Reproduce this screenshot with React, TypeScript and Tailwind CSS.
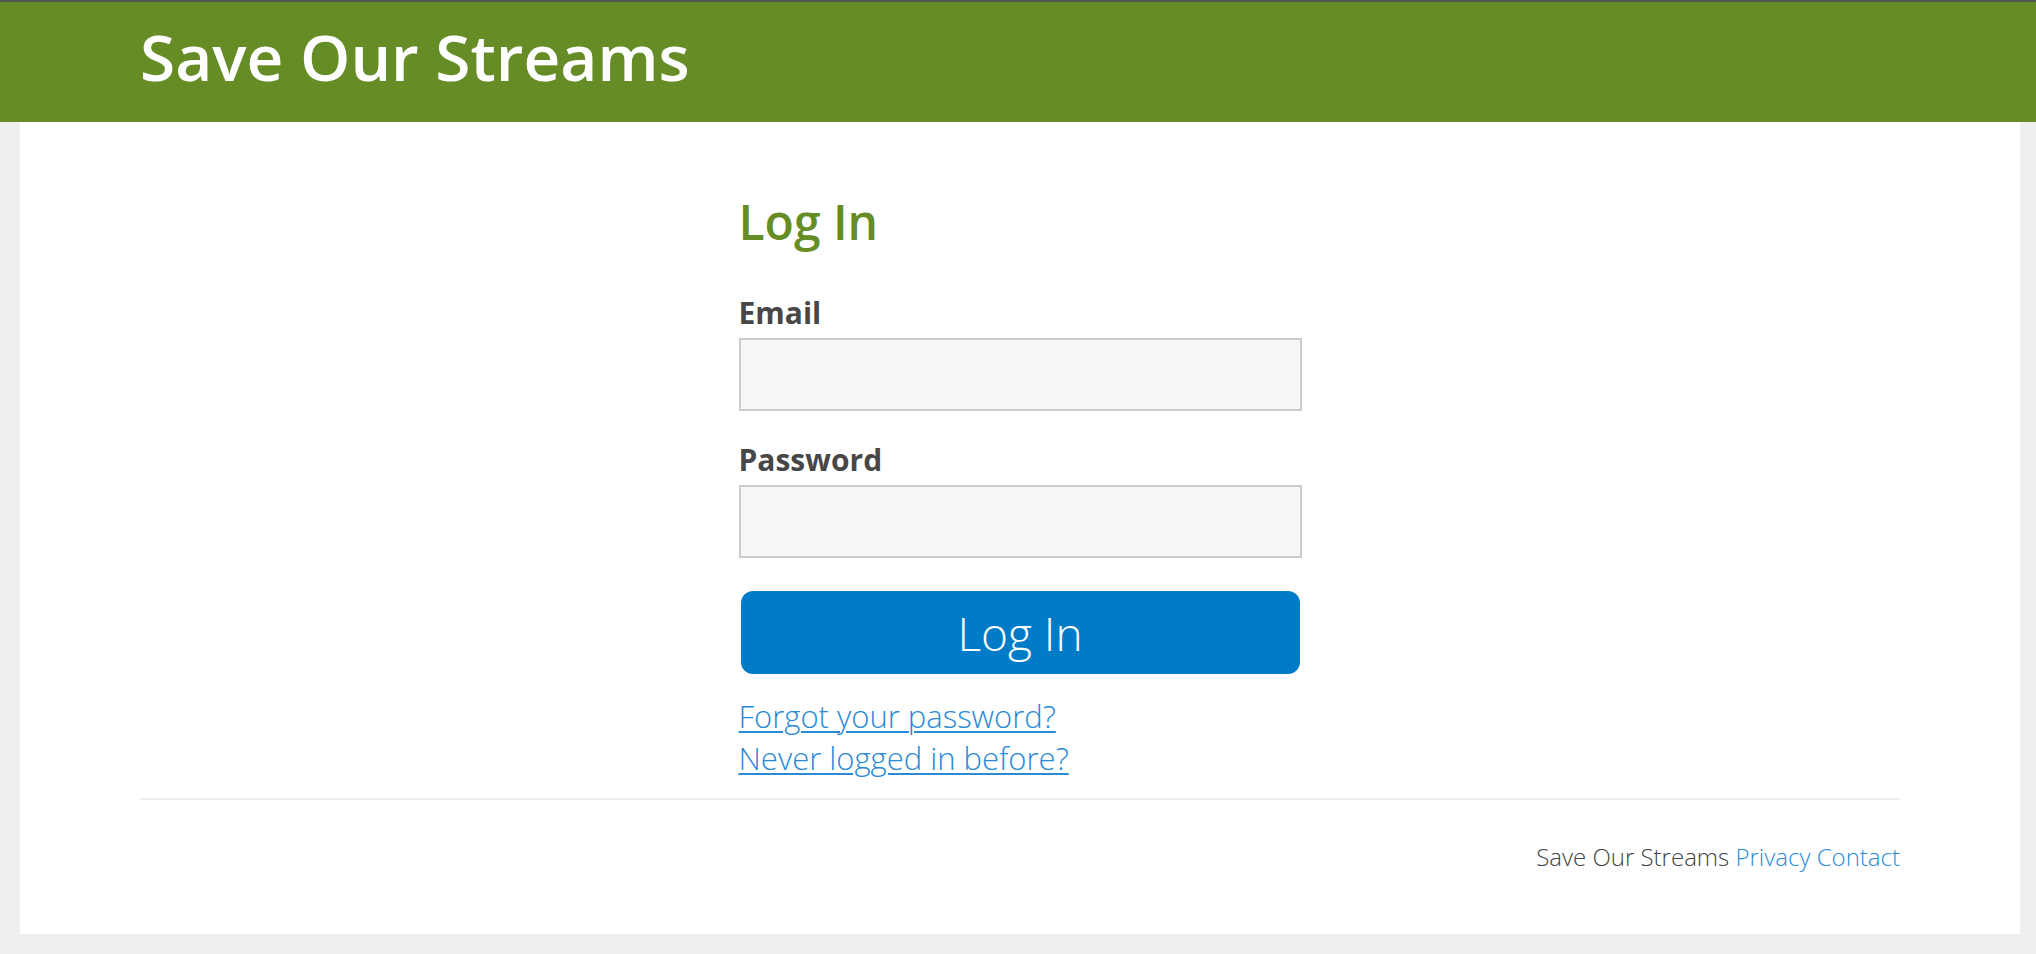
import React, { useState } from 'react'

const Login = () => {
  const [formData, setFormData] = useState({
    email: "",
    password: ""
  })

  const handleSubmit = (e: React.FormEvent) => {
    e.preventDefault()
  }

  return (
    <div className="min-h-screen bg-[#eeeeee] font-['Open_Sans',sans-serif] text-[#444444]">
      <header className="border-t-2 border-[#555555] bg-[#668c26] pt-[23px] pb-[33px]">
        <h1 className="pl-[140px] text-[64px] leading-[64px] font-semibold text-white">Save Our Streams</h1>
      </header>
      <main className="ml-[20px] w-[2000px] bg-white px-[120px] pt-[76px] pb-[65px]">
        <form onSubmit={(e) => handleSubmit(e)} className="mx-auto flex w-[563px] flex-col">
          <h2 className="text-[48px] leading-[48px] font-semibold text-[#668c26]">Log In</h2>
          <label htmlFor="email" className="mt-[52px] text-[30px] leading-[30px] font-bold text-[#474747]">Email</label>
          <input
            value={formData.email}
            onChange={(e) => setFormData({ ...formData, email: e.target.value })}
            type="email"
            name="email"
            id="email"
            className="mt-[10px] h-[73px] border-2 border-[#cccccc] bg-[#f6f6f6] px-3 text-[30px] outline-none"
          />
          <label htmlFor="password" className="mt-[34px] text-[30px] leading-[30px] font-bold text-[#474747]">Password</label>
          <input
            value={formData.password}
            onChange={(e) => setFormData({ ...formData, password: e.target.value })}
            type="password"
            name="password"
            id="password"
            className="mt-[10px] h-[73px] border-2 border-[#cccccc] bg-[#f6f6f6] px-3 text-[30px] outline-none"
          />
          <button type="submit" className="mx-[2px] mt-[33px] h-[83px] rounded-[12px] bg-[#007bc7] text-center text-[46px] leading-[78px] font-light text-white">
            Log In
          </button>
          <div className="mt-[21px] flex flex-col items-start text-[31px] leading-[42px] font-light">
            <a href="#" className="text-[#2a8ad4] underline decoration-2 underline-offset-[3px]">Forgot your password?</a>
            <a href="#" className="text-[#2a8ad4] underline decoration-2 underline-offset-[3px]">Never logged in before?</a>
          </div>
        </form>
        <hr className="mt-[19px] border-t-2 border-[#eeeeee]" />
        <footer className="mt-[45px] text-right text-[24px] leading-[24px] font-light text-[#444444]">
          Save Our Streams <a href="#" className="text-[#2b8dd8]">Privacy</a> <a href="#" className="text-[#2b8dd8]">Contact</a>
        </footer>
      </main>
    </div>
  )
}

export default Login;
